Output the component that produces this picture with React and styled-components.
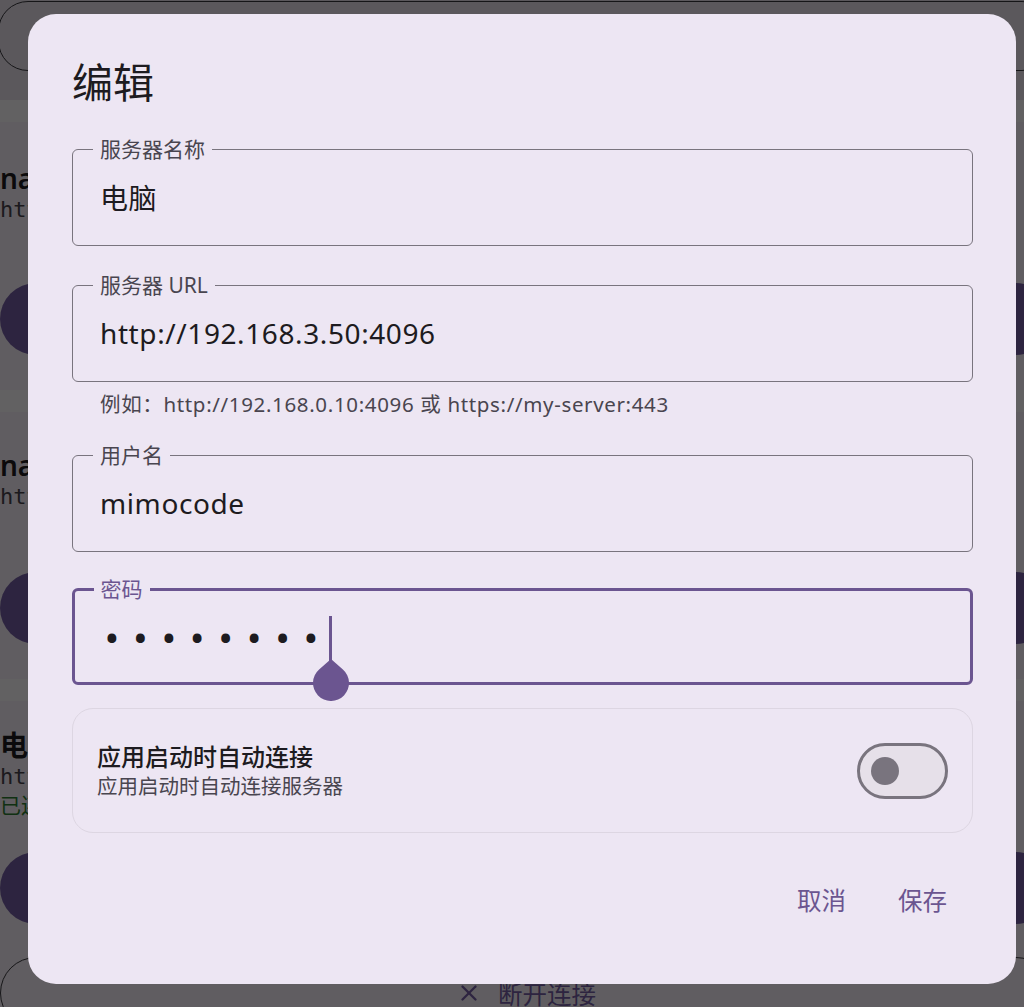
import React from 'react'
import styled, { createGlobalStyle } from 'styled-components'
import { EllipsisVertical, X } from 'lucide-react'

const GlobalStyle = createGlobalStyle`
  html, body {
    margin: 0;
    padding: 0;
    height: 1007px;
    overflow: hidden;
  }
  body {
    font-family: "Noto Sans", "Noto Sans CJK SC", sans-serif;
    color: #1d1b20;
  }
  * { box-sizing: border-box; }
`

const servers = [
  { name: 'nas', url: 'http://192.168.3.8:4096', top: 38, gap: 59 },
  { name: 'nas', url: 'http://192.168.3.9:4096', top: 35, gap: 61 },
  { name: '电脑', url: 'http://192.168.3.50:4096', top: 26, gap: 33, connected: true },
]

function App() {
  return (
    <>
      <GlobalStyle />
      <Screen>
        <Page>
          <TopArea>
            <SearchBar />
          </TopArea>
          {servers.map((s, i) => (
            <React.Fragment key={i}>
              <Band />
              <ServerCard $top={s.top}>
                <CardHead>
                  <div>
                    <ServerName>{s.name}</ServerName>
                    <ServerUrl>{s.url}</ServerUrl>
                    {s.connected && <Status>已连接</Status>}
                  </div>
                  <EllipsisVertical size={36} color="#1d1b20" />
                </CardHead>
                <FilledButton $gap={s.gap}>连接</FilledButton>
              </ServerCard>
            </React.Fragment>
          ))}
          <OutlineButton>
            <X size={26} strokeWidth={2.2} />
            断开连接
          </OutlineButton>
        </Page>

        <Scrim>
          <Dialog>
            <Title>编辑</Title>

            <Field>
              <Legend>服务器名称</Legend>
              <InputRow>电脑</InputRow>
            </Field>

            <Field $gap={27}>
              <Legend>服务器 URL</Legend>
              <InputRow>http://192.168.3.50:4096</InputRow>
            </Field>
            <Helper>例如：http://192.168.0.10:4096 或 https://my-server:443</Helper>

            <Field $gap={25}>
              <Legend>用户名</Legend>
              <InputRow>mimocode</InputRow>
            </Field>

            <Field $gap={25} $focused>
              <Legend $focused>密码</Legend>
              <InputRow $focused>
                <Dots>••••••••</Dots>
                <Caret>
                  <Handle width="38" height="42" viewBox="0 0 38 42">
                    <path d="M19 0 L30.9 10.5 A18 18 0 1 1 7.1 10.5 Z" fill="#6b5590" />
                  </Handle>
                </Caret>
              </InputRow>
            </Field>

            <SettingCard>
              <SettingText>
                <SettingTitle>应用启动时自动连接</SettingTitle>
                <SettingSub>应用启动时自动连接服务器</SettingSub>
              </SettingText>
              <Switch role="switch" aria-checked="false">
                <Thumb />
              </Switch>
            </SettingCard>

            <Actions>
              <TextButton>取消</TextButton>
              <TextButton>保存</TextButton>
            </Actions>
          </Dialog>
        </Scrim>
      </Screen>
    </>
  )
}

export default App

const Screen = styled.div`
  position: relative;
  width: 1024px;
  height: 1007px;
  overflow: hidden;
`

/* page behind the dialog */

const Page = styled.div`
  width: 1052px;
  height: 1007px;
  overflow: hidden;
  background: #f9f3fb;
`

const TopArea = styled.div`
  background: #ece6ef;
  padding: 1px 0 29px;
`

const SearchBar = styled.div`
  height: 70px;
  margin-left: -2px;
  border: 1.5px solid #3b3940;
  border-radius: 30px;
`

const Band = styled.div`
  height: 22px;
  background: #fffbff;
`

const ServerCard = styled.div`
  padding: ${(p) => p.$top}px 0 35px;
`

const CardHead = styled.div`
  display: flex;
  justify-content: space-between;
  align-items: flex-start;
  padding-right: 2px;
`

const ServerName = styled.div`
  font-size: 28px;
  line-height: 36px;
  font-weight: 600;
`

const ServerUrl = styled.div`
  font-family: "DejaVu Sans Mono", monospace;
  font-size: 22px;
  line-height: 28px;
  color: #49454f;
`

const Status = styled.div`
  font-size: 21px;
  line-height: 28px;
  color: #2e7d32;
`

const FilledButton = styled.div`
  margin-top: ${(p) => p.$gap}px;
  height: 72px;
  border-radius: 36px;
  background: #765ea6;
  color: #fff;
  font-size: 25px;
  display: flex;
  align-items: center;
  justify-content: center;
`

const OutlineButton = styled.div`
  margin-top: -2px;
  height: 72px;
  border: 1.5px solid #3b3940;
  border-radius: 36px;
  display: flex;
  align-items: center;
  justify-content: center;
  gap: 16px;
  color: #765ea6;
  font-size: 24.5px;
`

const Scrim = styled.div`
  position: absolute;
  inset: 0;
  background: rgba(0, 0, 0, 0.615);
  display: flex;
  padding: 14px 8px 23px 28px;
`

/* dialog */

const Dialog = styled.div`
  flex: 1;
  background: #ede6f3;
  border-radius: 28px;
  padding: 42px 43px 50px 44px;
  display: flex;
  flex-direction: column;
`

const Title = styled.h1`
  margin: 0 0 29px;
  font-size: 41px;
  line-height: 52px;
  font-weight: 400;
  color: #1d1b20;
`

const Field = styled.fieldset`
  margin: ${(p) => p.$gap || 0}px 0 0;
  padding: 0 27px;
  min-width: 0;
  border: ${(p) => (p.$focused ? '3px solid #6b5590' : '1.5px solid #79747e')};
  border-radius: 6px;
`

const Legend = styled.legend`
  margin-left: ${(p) => (p.$focused ? '-8.5px' : '-7px')};
  padding: 0 7px;
  font-size: 21px;
  line-height: 24px;
  color: ${(p) => (p.$focused ? '#6b5590' : '#49454f')};
`

const InputRow = styled.div`
  height: ${(p) => (p.$focused ? '81px' : '84px')};
  padding-bottom: 12px;
  display: flex;
  align-items: center;
  margin-left: ${(p) => (p.$focused ? '-1.5px' : '0')};
  font-size: 28px;
  letter-spacing: 0.6px;
  color: #1d1b20;
`

const Helper = styled.div`
  margin-top: 8px;
  padding-left: 28px;
  font-size: 20.5px;
  line-height: 28px;
  letter-spacing: 0.65px;
  color: #49454f;
`

const Dots = styled.span`
  font-family: Roboto, sans-serif;
  font-size: 44px;
  line-height: 1;
  letter-spacing: 13.6px;
  padding-left: 4px;
  margin-top: 8px;
`

const Caret = styled.span`
  position: relative;
  width: 3px;
  height: 46px;
  margin-left: -3px;
  margin-top: 6px;
  background: #6b5590;
`

const Handle = styled.svg`
  position: absolute;
  left: -17.5px;
  top: 43px;
`

const SettingCard = styled.div`
  margin-top: 23px;
  height: 125px;
  border: 1.5px solid #ddd6e2;
  border-radius: 21px;
  padding: 0 24px 0 24px;
  display: flex;
  align-items: center;
  justify-content: space-between;
`

const SettingText = styled.div`
  display: flex;
  flex-direction: column;
`

const SettingTitle = styled.div`
  font-size: 24px;
  line-height: 30px;
  font-weight: 500;
  color: #1d1b20;
`

const SettingSub = styled.div`
  font-size: 20.5px;
  line-height: 28px;
  color: #49454f;
`

const Switch = styled.div`
  width: 91px;
  height: 56px;
  border: 3.5px solid #79747e;
  border-radius: 28px;
  background: #e6e0e9;
  display: flex;
  align-items: center;
  padding-left: 10.5px;
`

const Thumb = styled.div`
  width: 28px;
  height: 28px;
  border-radius: 50%;
  background: #79747e;
`

const Actions = styled.div`
  margin-top: auto;
  display: flex;
  justify-content: flex-end;
`

const TextButton = styled.div`
  height: 70px;
  padding: 0 26px;
  border-radius: 35px;
  display: flex;
  align-items: center;
  font-size: 24.5px;
  color: #6b5590;
`
